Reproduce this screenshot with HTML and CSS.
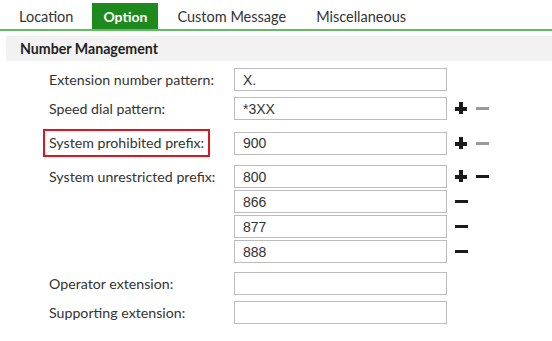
FILE: index.html
```html
<!DOCTYPE html>
<html lang="en">
<head>
  <meta charset="UTF-8">
  <meta name="viewport" content="width=device-width, initial-scale=1.0">
  <title>Number Management</title>
  <link rel="stylesheet" href="styles.css">
</head>
<body>

  <div class="tabs">
    <div class="tab">Location</div>
    <div class="tab active">Option</div>
    <div class="tab">Custom Message</div>
    <div class="tab">Miscellaneous</div>
  </div>

  <div class="section-title">Number Management</div>

  <div class="form">
    <div class="row">
      <label class="label">Extension number pattern:</label>
      <div class="fields">
        <div class="field"><input type="text" value="X."></div>
      </div>
    </div>

    <div class="row">
      <label class="label">Speed dial pattern:</label>
      <div class="fields">
        <div class="field">
          <input type="text" value="*3XX">
          <span class="btn plus"></span><span class="btn minus off"></span>
        </div>
      </div>
    </div>

    <div class="row marked">
      <label class="label"><span class="outline">System prohibited prefix:</span></label>
      <div class="fields">
        <div class="field">
          <input type="text" value="900">
          <span class="btn plus"></span><span class="btn minus off"></span>
        </div>
      </div>
    </div>

    <div class="row">
      <label class="label">System unrestricted prefix:</label>
      <div class="fields">
        <div class="field">
          <input type="text" value="800">
          <span class="btn plus"></span><span class="btn minus"></span>
        </div>
        <div class="field"><input type="text" value="866"><span class="btn minus"></span></div>
        <div class="field"><input type="text" value="877"><span class="btn minus"></span></div>
        <div class="field"><input type="text" value="888"><span class="btn minus"></span></div>
      </div>
    </div>

    <div class="row spaced">
      <label class="label">Operator extension:</label>
      <div class="fields">
        <div class="field"><input type="text" value=""></div>
      </div>
    </div>

    <div class="row">
      <label class="label">Supporting extension:</label>
      <div class="fields">
        <div class="field"><input type="text" value=""></div>
      </div>
    </div>
  </div>

</body>
</html>
```

FILE: styles.css
```css
body {
  margin: 0;
  background: white;
  font-family: Lato, "Open Sans", sans-serif;
  font-size: 14.2px;
  color: #333;
}

.tabs {
  display: flex;
  gap: 8px;
  padding: 3px 0 0 8px;
  border-bottom: 2px solid #62bb62;
}

.tab {
  height: 26px;
  line-height: 27px;
  padding: 0 11px;
  font-size: 14.5px;
  color: #333;
}

.tab.active {
  background: #1e8a1e;
  color: white;
  font-weight: bold;
  font-size: 14px;
}

.section-title {
  margin: 5px 0 0 6px;
  height: 25px;
  line-height: 25px;
  padding-left: 14px;
  background: #f2f2f2;
  font-weight: bold;
  color: #222;
}

.form {
  display: flex;
  flex-direction: column;
  gap: 6px;
  padding: 7px 0 0 43px;
}

.row {
  display: flex;
  align-items: flex-start;
}

.row.marked {
  margin: 3px 0 2px;
  align-items: center;
}

.row.spaced {
  margin-top: 3px;
}

.label {
  width: 191px;
  padding-left: 6px;
  box-sizing: border-box;
  line-height: 23px;
  white-space: nowrap;
}

.outline {
  display: inline-block;
  margin-left: -6px;
  padding: 1px 4px 1px 4px;
  border: 2px solid #e0141e;
  line-height: 22px;
}

.fields {
  display: flex;
  flex-direction: column;
  gap: 2px;
}

.field {
  display: flex;
  align-items: center;
  height: 23px;
}

.field input {
  width: 213px;
  height: 23px;
  box-sizing: border-box;
  margin: 0;
  padding: 0 8px;
  border: 1px solid #bcbcbc;
  font-family: "Liberation Sans", Arial, sans-serif;
  font-size: 14px;
  color: #333;
  outline: none;
}

.btn {
  position: relative;
  display: inline-block;
  width: 13px;
  height: 13px;
  margin-left: 8px;
}

.btn.minus::before,
.btn.plus::before,
.btn.plus::after {
  content: "";
  position: absolute;
  background: #1a1a1a;
}

.btn.plus::before {
  left: 0;
  top: 5px;
  width: 12px;
  height: 4px;
}

.btn.plus::after {
  left: 4px;
  top: 0;
  width: 4px;
  height: 12px;
}

.btn.minus::before {
  left: 0;
  top: 5px;
  width: 13px;
  height: 3px;
}

.btn.minus.off::before {
  background: #9a9a9a;
}
```
